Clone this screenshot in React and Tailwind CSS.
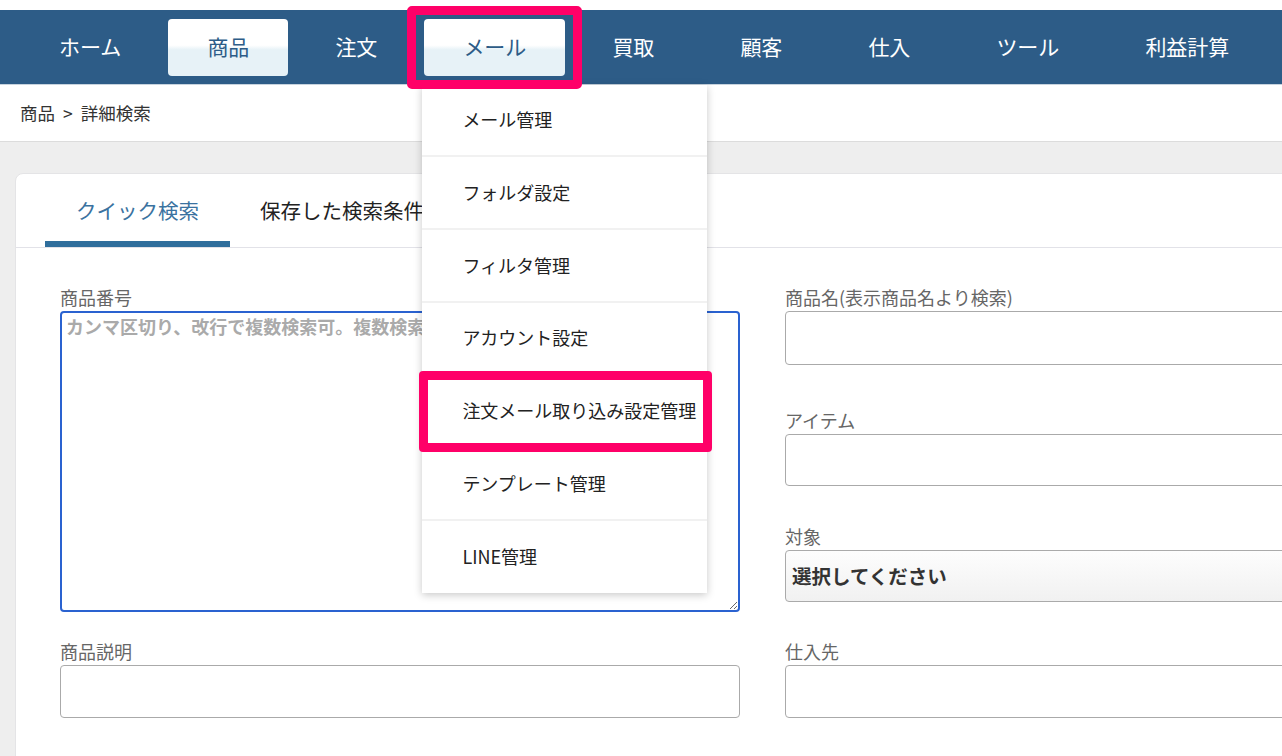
import React from "react";

const navItems = [
  { label: "ホーム" },
  { label: "商品", active: true },
  { label: "注文" },
  { label: "メール", active: true, open: true },
  { label: "買取" },
  { label: "顧客" },
  { label: "仕入" },
  { label: "ツール" },
  { label: "利益計算" },
];

const mailMenu = [
  "メール管理",
  "フォルダ設定",
  "フィルタ管理",
  "アカウント設定",
  "注文メール取り込み設定管理",
  "テンプレート管理",
  "LINE管理",
];

// Dropdown under the メール tab
const MailDropdown = () => (
  <div className="absolute left-[-2px] top-[66px] z-10 w-[285px] bg-white shadow-[0_2px_8px_rgba(0,0,0,0.22)]">
    {mailMenu.map((item, i) => (
      <div
        key={item}
        className={
          "relative flex h-[72.7px] items-center pl-[40px] text-[18px] text-[#222] " +
          (i < mailMenu.length - 1 ? "border-b-2 border-[#f1f1f1]" : "")
        }
      >
        {item}
        {i === 4 && (
          <div className="pointer-events-none absolute -left-[3px] -right-[5px] -top-[4px] -bottom-[6px] z-20 rounded-[4px] border-[9px] border-[#ff0068]" />
        )}
      </div>
    ))}
  </div>
);

const Field = ({ label, className = "", children }) => (
  <div className={className}>
    <div className="mb-[4px] h-[20px] text-[18px] leading-[20px] text-[#666]">{label}</div>
    {children}
  </div>
);

export default function App() {
  return (
    <div className="relative h-[756px] w-full overflow-hidden bg-white font-['Noto_Sans_CJK_JP','Noto_Sans',sans-serif]">
      <div className="h-[10px]" />

      {/* Main navigation */}
      <nav className="relative z-10 flex h-[75px] items-center gap-[8px] border-b border-[#c7d3de] bg-[#2d5c87] pl-[20px]">
        {navItems.map((item) => (
          <div key={item.label} className="relative">
            <div
              className={
                "flex h-[57px] items-center rounded-[4px] px-[39px] text-[21px] " +
                (item.active
                  ? "bg-[linear-gradient(to_bottom,#ffffff_0%,#ffffff_46%,#e7f2f7_54%,#e7f2f7_100%)] text-[#2d5c87]"
                  : "text-white")
              }
            >
              {item.label}
            </div>
            {item.open && (
              <>
                <div className="pointer-events-none absolute -left-[17px] -right-[17px] -top-[13px] -bottom-[13px] z-20 rounded-[5px] border-[9px] border-[#ff0068]" />
                <MailDropdown />
              </>
            )}
          </div>
        ))}
      </nav>

      {/* Breadcrumb */}
      <div className="flex h-[57px] items-center border-b border-[#dcdcdc] pl-[20px] text-[17.5px] text-[#333]">
        <span>商品</span>
        <span className="mx-[8px]">&gt;</span>
        <span>詳細検索</span>
      </div>

      {/* Content */}
      <div className="h-full bg-[#eeeeee] pl-[15px] pt-[31px]">
        <div className="min-h-[700px] w-[1520px] rounded-tl-[8px] border border-[#e4e4e6] bg-white">
          <div className="flex h-[74px] border-b border-[#e2e2e8] pl-[29px]">
            <div className="flex items-center border-y-[6px] border-t-transparent border-b-[#2f6e9c] px-[31px] text-[20.5px] text-[#3a72a0]">
              クイック検索
            </div>
            <div className="flex items-center border-y-[6px] border-transparent px-[30px] text-[20.5px] text-[#222]">
              保存した検索条件
            </div>
          </div>

          <div className="grid grid-cols-[680px_680px] gap-x-[45px] gap-y-[29px] pl-[44px] pt-[39px]">
            <Field label="商品番号">
              <textarea
                className="block h-[301px] w-full rounded-[4px] border-2 border-[#2a62d0] pl-[4px] text-[18px] font-bold leading-[26px] outline-none placeholder:text-[#aaaaaa]"
                placeholder="カンマ区切り、改行で複数検索可。複数検索時は完全一致"
              />
            </Field>
            <div>
              <Field label="商品名(表示商品名より検索)" className="mb-[45px]">
                <div className="h-[54px] rounded-[4px] border border-[#aaaaaa] bg-white" />
              </Field>
              <Field label="アイテム" className="mb-[40px]">
                <div className="h-[52px] rounded-[4px] border border-[#aaaaaa] bg-white" />
              </Field>
              <Field label="対象">
                <div className="flex h-[52px] items-center rounded-[4px] border border-[#aaaaaa] bg-[linear-gradient(to_bottom,#fdfdfd,#f1f1f1)] pl-[6px] text-[19.5px] font-bold text-[#333]">
                  選択してください
                </div>
              </Field>
            </div>
            <Field label="商品説明">
              <div className="h-[53px] rounded-[4px] border border-[#aaaaaa] bg-white" />
            </Field>
            <Field label="仕入先">
              <div className="h-[53px] rounded-[4px] border border-[#aaaaaa] bg-white" />
            </Field>
          </div>
        </div>
      </div>
    </div>
  );
}
